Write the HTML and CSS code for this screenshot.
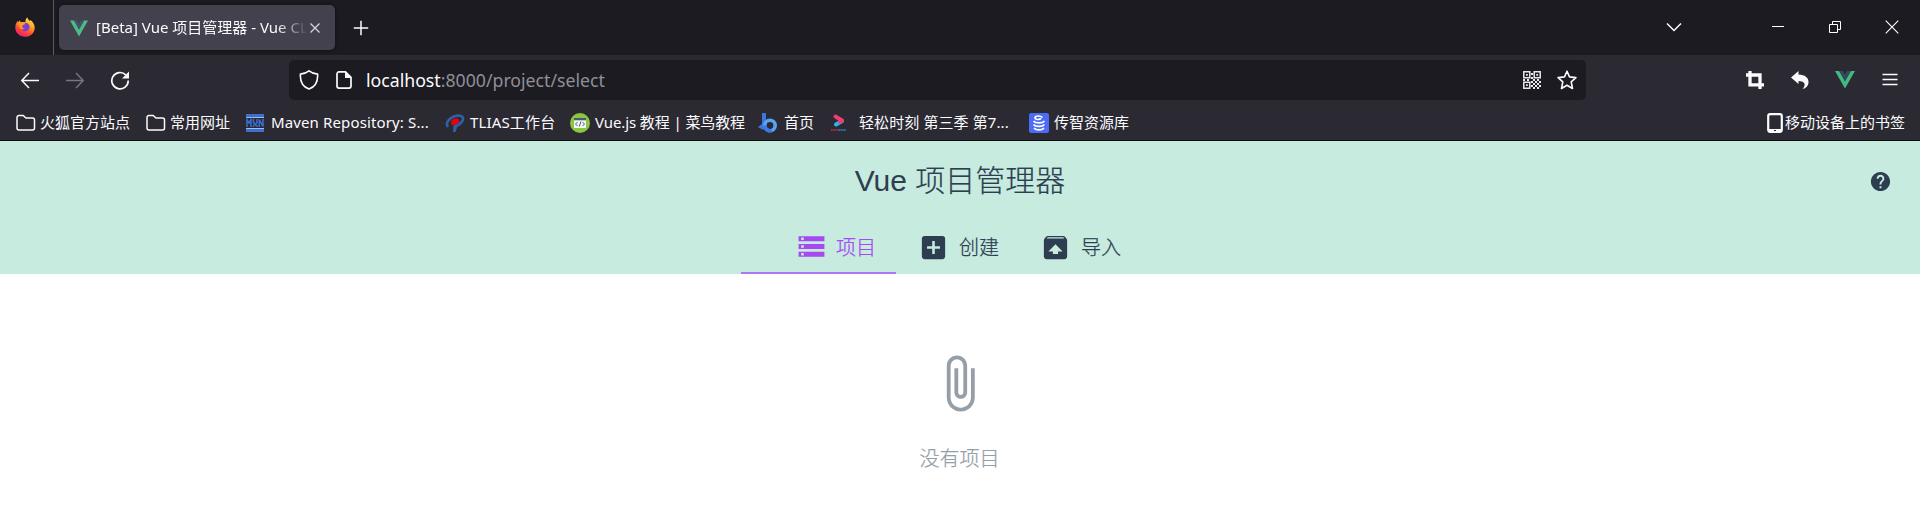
FILE: index.html
```html
<!DOCTYPE html>
<html lang="zh-CN">
<head>
<meta charset="utf-8">
<title>[Beta] Vue 项目管理器 - Vue CLI</title>
<link rel="stylesheet" href="styles.css">
</head>
<body>
<div class="tabbar">
  <div class="fx"><svg width="20" height="20" viewBox="0 0 20 20">
    <defs><linearGradient id="flame" x1=".8" y1="0" x2=".3" y2="1"><stop offset="0" stop-color="#fff04a"/><stop offset=".4" stop-color="#ffa020"/><stop offset=".75" stop-color="#ff3f3c"/><stop offset="1" stop-color="#e81c80"/></linearGradient></defs>
    <path fill="url(#flame)" d="M12.3 0.2c.3 1.7 1.5 2.6 2.5 3.7l.6-1c3 2.300 4.300 5 4.300 7.800 0 5.200-4.200 9.100-9.700 9.100S.3 15.700.3 10.500c0-2.700 1-5 2.700-6.800l.4 1.500 1.400-2 .9 2.100c2-.3 3.400-.5 4.700-.2C10.300 3.300 11 1.500 12.300.2z"/>
    <circle cx="10.300" cy="10" r="4.300" fill="#7a3fd0"/>
    <path fill="#ff9a22" d="M4 5.800c2.200-.8 4.900-.4 6.600 1-1.200.9-2.700.9-3.300 2.200-.3 1.800.9 2.600 2.500 2.300-1.200 1.500-4 1.300-5-.8-.7-1.500-1.100-3.200-.8-4.700z"/>
  </svg></div>
  <div class="tab">
    <svg class="tab-logo" width="20" height="18" viewBox="0 0 20 18"><path fill="#4dba87" d="M1 .5h4l5 9 5-9h4l-9 16z"/><path fill="#435466" d="M5 .5h3l2 3.800L12 .5h3l-5 9z"/></svg>
    <span class="tab-title">[Beta] Vue 项目管理器 - Vue CLI</span>
    <svg class="tab-close" width="12" height="12" viewBox="0 0 12 12"><path d="M1.500 1.500l9 9m0-9l-9 9" stroke="#d8d8de" stroke-width="1.200"/></svg>
  </div>
  <svg class="newtab" width="16" height="16" viewBox="0 0 16 16"><path d="M8 .8v14.400M.8 8h14.400" stroke="#fbfbfe" stroke-width="1.500"/></svg>
  <div class="window-controls">
    <svg width="16" height="16" viewBox="0 0 16 16"><path d="M1 3.500l7 7 7-7" fill="none" stroke="#fbfbfe" stroke-width="1.500"/></svg>
    <svg class="minimize" width="12" height="12" viewBox="0 0 12 12"><path d="M0 4.500h12" stroke="#fff"/></svg>
    <svg class="restore" width="13" height="13" viewBox="0 0 13 13"><path d="M.5 3.500h8v8h-8zM3.500 3.500v-3h8v8H8.500" fill="none" stroke="#fff"/></svg>
    <svg class="close" width="14" height="14" viewBox="0 0 14 14"><path d="M.7.7l12.600 12.600m0-12.600L.7 13.300" stroke="#fff" stroke-width="1.100"/></svg>
  </div>
</div>
<div class="toolbar">
  <div class="nav">
    <svg width="20" height="20" viewBox="0 0 20 20"><path d="M19 10.500H2M9 3L1.800 10.500 9 18" fill="none" stroke="#fbfbfe" stroke-width="1.500"/></svg>
    <svg width="20" height="20" viewBox="0 0 20 20"><path d="M1 10.500h17M11 3l7.200 7.500L11 18" fill="none" stroke="#77767e" stroke-width="1.500"/></svg>
    <svg width="20" height="20" viewBox="0 0 20 20"><path d="M15.800 4.900A8.200 8.200 0 1 0 18.200 10.500" fill="none" stroke="#fbfbfe" stroke-width="1.700"/><path d="M19 1.500v7h-7z" fill="#fbfbfe"/></svg>
  </div>
  <div class="urlbar">
    <svg width="20" height="20" viewBox="0 0 20 20"><path d="M10 .9C7.500 3 4.800 3.800 1.400 4.100 1 10.500 3 16.500 10 19.100c7-2.600 9-8.600 8.600-15C15.200 3.800 12.500 3 10 .9z" fill="none" stroke="#fbfbfe" stroke-width="1.600" stroke-linejoin="round"/></svg>
    <svg class="page-icon" width="18" height="20" viewBox="0 0 18 20"><path d="M10.500 1.900H4A2 2 0 0 0 2 3.900v12.200a2 2 0 0 0 2 2h10a2 2 0 0 0 2-2V7.400z" fill="none" stroke="#fbfbfe" stroke-width="1.700"/><path d="M10 1.500l6.500 6.500H10z" fill="#fbfbfe"/></svg>
    <span class="url"><b>localhost</b>:8000/project/select</span>
    <svg class="qr" width="18" height="18" viewBox="0 0 18 18"><path d="M.8.8h6v6h-6zM11.200.8h6v6h-6zM.8 11.200h6v6h-6z" fill="none" stroke="#e8e8ec" stroke-width="1.500"/><path fill="#e8e8ec" d="M3 3h1.800v1.800H3zM13.300 3h1.800v1.800h-1.800zM3 13.300h1.800v1.800H3zM8 2h2v2H8zM8 6h2v2H8zM0 8h2v2H0zM4 8h2v2H4zM10 8h2v2h-2zM14 8h2v2h-2zM8 10h2v2H8zM12 10h2v2h-2zM16 10h2v2h-2zM10 12h2v2h-2zM14 12h2v2h-2zM8 14h2v2H8zM12 14h2v2h-2zM16 14h2v2h-2zM10 16h2v2h-2zM14 16h2v2h-2z"/></svg>
    <svg width="20" height="20" viewBox="0 0 20 20"><path d="M10 1.200l2.500 5.700 6.400.7-4.700 4.300 1.300 6.600L10 15.200l-5.500 3.300 1.300-6.600L1.100 7.600l6.400-.7z" fill="none" stroke="#fbfbfe" stroke-width="1.600" stroke-linejoin="round"/></svg>
  </div>
  <div class="extensions">
    <svg width="18" height="18" viewBox="0 0 18 18"><path d="M4 0v13.800H18M0 4h14v14" fill="none" stroke="#fbfbfe" stroke-width="3.300"/></svg>
    <svg width="18" height="18" viewBox="0 0 18 18"><path d="M0 6.500L7.500 0v3.500C14 3.500 18 7 17.500 12c-.3 3-2.500 5.300-6 6 4-4 2.500-8-4-8v3z" fill="#fbfbfe"/></svg>
    <svg class="devtools" width="20" height="18" viewBox="0 0 20 18"><path fill="#42b883" d="M0 0h4.200L10 10.200 15.800 0H20L10 17.500z"/><path fill="#35495e" d="M4.200 0h3.700L10 3.700 12.100 0h3.700L10 10.200z"/></svg>
    <svg width="16" height="16" viewBox="0 0 16 16"><path d="M.5 2.500h15M.5 7.500h15M.5 12.500h15" stroke="#fbfbfe" stroke-width="1.400"/></svg>
  </div>
</div>
<div class="bookmarks">
  <div class="bm bm-sites"><svg width="20" height="18" viewBox="0 0 20 18"><path class="folder" d="M1 14V3.500a2 2 0 0 1 2-2h4.200L10 4h6.500a2 2 0 0 1 2 2v8a2 2 0 0 1-2 2H3a2 2 0 0 1-2-2z"/></svg><span>火狐官方站点</span></div>
  <div class="bm bm-common"><svg width="20" height="18" viewBox="0 0 20 18"><path class="folder" d="M1 14V3.500a2 2 0 0 1 2-2h4.200L10 4h6.500a2 2 0 0 1 2 2v8a2 2 0 0 1-2 2H3a2 2 0 0 1-2-2z"/></svg><span>常用网址</span></div>
  <div class="bm bm-maven"><svg width="20" height="18" viewBox="0 0 20 18"><path fill="#3b6fd0" d="M0 0h18v3H0zM0 15h18v3H0z"/><path fill="#a9bbdc" d="M0 3h18v1H0zM0 14h18v1H0z"/><path fill="none" stroke="#3a6fd4" stroke-width="1.500" d="M1 13V5.500L3 9l2-3.500V13M7.500 5v3.500L9.200 11 11 8.500V5M7.500 13v-2M11 13v-2M13.300 13V5.500l3.700 7V5"/></svg><span>Maven Repository: S...</span></div>
  <div class="bm bm-tlias"><svg width="20" height="18" viewBox="0 0 20 18"><path d="M3 13C-1 7 9 0 16 2c5 2 0 9-7 10.500" fill="none" stroke="#2c62a8" stroke-width="2.600"/><path d="M8.500 11.500L8 18h2.500l2-6z" fill="#2c62a8"/><ellipse cx="10" cy="7.800" rx="4.300" ry="3" fill="#e50012" transform="rotate(-25 10 7.800)"/></svg><span>TLIAS工作台</span></div>
  <div class="bm bm-runoob"><svg width="20" height="20" viewBox="0 0 20 20"><circle cx="10" cy="10" r="10" fill="#8cc63f"/><path fill="#f3f5f5" d="M4 5h12v10H4z"/><path fill="#465a6b" d="M4 5h12v2.300H4z"/><path d="M7.500 9L5.500 11l2 2m5-4l2 2-2 2m-1.600-4.500l-1.600 5" fill="none" stroke="#465a6b"/></svg><span>Vue.js 教程 | 菜鸟教程</span></div>
  <div class="bm bm-home"><svg width="20" height="20" viewBox="0 0 20 20"><path fill="#3977df" d="M4 0h4v11l-3 6-5-3 4-3z"/><circle cx="12" cy="12.500" r="5.200" fill="none" stroke="#58a4f4" stroke-width="3.600"/><path d="M6.800 12.500a5.200 5.200 0 0 0 7 4.900" fill="none" stroke="#3d78e8" stroke-width="3.600"/></svg><span>首页</span></div>
  <div class="bm bm-youku"><svg width="20" height="20" viewBox="0 0 20 20"><path d="M12 8l-6 3.500" stroke="#2bb5ee" stroke-width="4" stroke-linecap="round"/><path d="M5.500 3.500l6.500 4-2 1" fill="none" stroke="#f33b6d" stroke-width="4" stroke-linejoin="round" stroke-linecap="round"/><path d="M1 17h8" stroke="#a32950" stroke-width="2" stroke-dasharray="1.500 .6"/><path d="M9 17h7" stroke="#2579a8" stroke-width="2" stroke-dasharray="1.500 .6"/></svg><span>轻松时刻 第三季 第7...</span></div>
  <div class="bm bm-itcast"><svg width="20" height="20" viewBox="0 0 20 20"><rect width="20" height="20" rx="2" fill="#4a6cf7"/><path d="M4.500 8c2 2.500 9 2.500 11 0M4.500 11.500c2 2.500 9 2.500 11 0M5 15c2 2.500 8 2.500 10 0M13.500 4.500c-2-2-7-2-7.500 0-.3 2.500 5 2.500 6 .8" fill="none" stroke="#fff" stroke-width="1.700"/></svg><span>传智资源库</span></div>
  <div class="bm bm-mobile"><svg width="16" height="20" viewBox="0 0 16 20"><rect x="1.200" y="1.200" width="13.600" height="17.600" rx="2" fill="none" stroke="#fbfbfe" stroke-width="2.200"/><path d="M1 16h14v2.500H1z" fill="#fbfbfe"/><path d="M7 17.500h2" stroke="#2b2a33"/></svg><span>移动设备上的书签</span></div>
</div>
<header class="page-head">
  <h1><span class="latin">Vue</span> 项目管理器</h1>
  <svg class="help" width="23" height="23" viewBox="0 0 24 24"><path fill="#2c3e50" d="M12 2C6.480 2 2 6.480 2 12s4.480 10 10 10 10-4.480 10-10S17.520 2 12 2zm1 17h-2v-2h2v2zm2.070-7.750l-.9.920C13.450 12.900 13 13.500 13 15h-2v-.5c0-1.100.45-2.100 1.170-2.830l1.240-1.260c.37-.36.59-.86.59-1.410 0-1.100-.9-2-2-2s-2 .9-2 2H8c0-2.210 1.790-4 4-4s4 1.790 4 4c0 .88-.36 1.680-.93 2.250z"/></svg>
  <nav class="tabs">
    <a class="nav-tab active"><svg width="31" height="31" viewBox="0 0 24 24"><path d="M2 20h20v-4H2v4zm2-3h2v2H4v-2zM2 4v4h20V4H2zm4 3H4V5h2v2zm-4 7h20v-4H2v4zm2-3h2v2H4v-2z"/></svg><span>项目</span></a>
    <a class="nav-tab"><svg width="31" height="31" viewBox="0 0 24 24"><path d="M19 3H5c-1.110 0-2 .9-2 2v14c0 1.100.89 2 2 2h14c1.100 0 2-.9 2-2V5c0-1.100-.9-2-2-2zm-2 10h-4v4h-2v-4H7v-2h4V7h2v4h4v2z"/></svg><span>创建</span></a>
    <a class="nav-tab"><svg width="31" height="31" viewBox="0 0 24 24"><path d="M20.550 5.220l-1.390-1.680C18.880 3.210 18.470 3 18 3H6c-.47 0-.88.21-1.150.55L3.460 5.220C3.170 5.570 3 6.010 3 6.500V19c0 1.100.89 2 2 2h14c1.100 0 2-.9 2-2V6.500c0-.49-.17-.93-.45-1.280zM12 9.500l5.500 5.500H14v2h-4v-2H6.500L12 9.500zM5.120 5l.82-1h12l.93 1H5.120z"/></svg><span>导入</span></a>
  </nav>
</header>
<main class="empty">
  <svg width="61" height="61" viewBox="0 0 24 24"><path fill="#959fa8" d="M16.500 6v11.500c0 2.210-1.790 4-4 4s-4-1.790-4-4V5a2.500 2.500 0 0 1 5 0v10.500c0 .55-.45 1-1 1s-1-.45-1-1V6H10v9.500a2.500 2.500 0 0 0 5 0V5c0-2.210-1.790-4-4-4S7 2.790 7 5v12.500c0 3.040 2.460 5.500 5.500 5.500s5.500-2.460 5.500-5.500V6h-1.500z"/></svg>
  <p>没有项目</p>
</main>
</body>
</html>
```
FILE: styles.css
```css
* { box-sizing: border-box; }
body {
  margin: 0;
  height: 512px;
  overflow: hidden;
  background: #fff;
  color: #fbfbfe;
  font-family: "Noto Sans", "Noto Sans CJK SC", sans-serif;
}
svg { display: block; flex: none; }

/* Browser tab strip */
.tabbar { display: flex; align-items: center; height: 55px; background: #1c1b22; }
.fx { display: flex; align-items: center; width: 54px; height: 55px; padding: 0 0 1px 15px; border-right: 1px solid #5b5a61; }
.tab {
  display: flex;
  align-items: center;
  width: 276px;
  height: 45px;
  margin-left: 5px;
  padding-left: 10px;
  border-radius: 5px;
  background: #42414d;
  box-shadow: 0 0 4px rgba(0, 0, 0, .5);
}
.tab-title {
  width: 212px;
  margin-left: 7px;
  padding-bottom: 2px;
  overflow: hidden;
  white-space: nowrap;
  font-size: 15px;
  -webkit-mask-image: linear-gradient(90deg, #000 180px, transparent 212px);
  mask-image: linear-gradient(90deg, #000 180px, transparent 212px);
}
.tab-logo { margin-top: 2px; }
.tab-close { margin-left: 1px; }
.newtab { margin-left: 18px; }
.window-controls { display: flex; align-items: center; margin-left: auto; padding-right: 21px; }
.minimize { margin-left: 90px; }
.restore { margin: 0 43px 0 45px; }
.close { margin-bottom: 1px; }

/* Navigation toolbar */
.toolbar { display: flex; align-items: center; height: 50px; background: #2b2a33; }
.nav { display: flex; gap: 25px; width: 289px; padding-left: 20px; }
.urlbar {
  display: flex;
  align-items: center;
  width: 1297px;
  height: 40px;
  padding: 0 9px 0 10px;
  border-radius: 5px;
  background: #1c1b22;
}
.page-icon { margin-left: 16px; }
.url { margin-left: 13px; font-size: 17.700px; color: #8f8f97; }
.url b { font-weight: 400; color: #fbfbfe; }
.qr { margin: 0 16px 0 auto; }
.extensions { display: flex; align-items: center; gap: 27px; margin-left: auto; padding-right: 22px; }
.devtools { margin-left: -1px; }

/* Bookmarks bar */
.bookmarks { display: flex; height: 36px; padding: 0 15px 0 16px; background: #2b2a33; border-bottom: 1px solid #0c0c0d; }
.bm { display: flex; align-items: center; gap: 4px; white-space: nowrap; font-size: 15px; }
.bm span { padding-bottom: 2px; }
.bm-sites { width: 130px; }
.bm-common { width: 100px; }
.bm-maven { width: 199px; gap: 5px; letter-spacing: .13px; }
.bm-tlias { width: 125px; gap: 5px; letter-spacing: .15px; }
.bm-runoob { width: 188px; gap: 5px; letter-spacing: -.1px; }
.bm-home { width: 72px; gap: 6px; }
.bm-youku { width: 199px; gap: 9px; letter-spacing: .1px; }
.bm-itcast { gap: 5px; }
.bm-mobile { gap: 2px; margin-left: auto; }
.folder { fill: none; stroke: #fbfbfe; stroke-width: 1.500; }

/* Project manager header */
.page-head {
  position: relative;
  display: flex;
  flex-direction: column;
  align-items: center;
  height: 133px;
  background: #c7ebdf;
  color: #2c3e50;
  font-family: "Liberation Sans", "Noto Sans CJK SC", sans-serif;
}
.page-head h1 { margin: 0; height: 80px; line-height: 80px; font-size: 30px; font-weight: 300; -webkit-text-stroke: .2px; }
.page-head .latin { font-weight: 400; -webkit-text-stroke: 0; }
.help { position: absolute; top: 29px; right: 28px; }
.tabs { display: flex; align-self: flex-start; margin-left: 741px; height: 53px; }
.nav-tab {
  display: flex;
  align-items: center;
  gap: 10px;
  height: 53px;
  padding: 0 19px 0 22px;
  font-size: 20px;
  font-weight: 300;
  -webkit-text-stroke: .25px;
  fill: #2c3e50;
}
.nav-tab span { padding-bottom: 2px; }
.nav-tab.active { padding: 0 20px 0 55px; gap: 9px; color: #a649f3; fill: #a649f3; border-bottom: 2px solid #ad77ef; }
.nav-tab.active span { padding-bottom: 0; }

/* Empty state */
.empty {
  display: flex;
  flex-direction: column;
  align-items: center;
  padding: 80px 1px 0 0;
  color: #959fa8;
  font: 300 20px "Liberation Sans", "Noto Sans CJK SC", sans-serif;
  -webkit-text-stroke: .25px;
}
.empty svg { margin-top: -1px; }
.empty p { margin: 30px 0 0; line-height: 30px; }
```
